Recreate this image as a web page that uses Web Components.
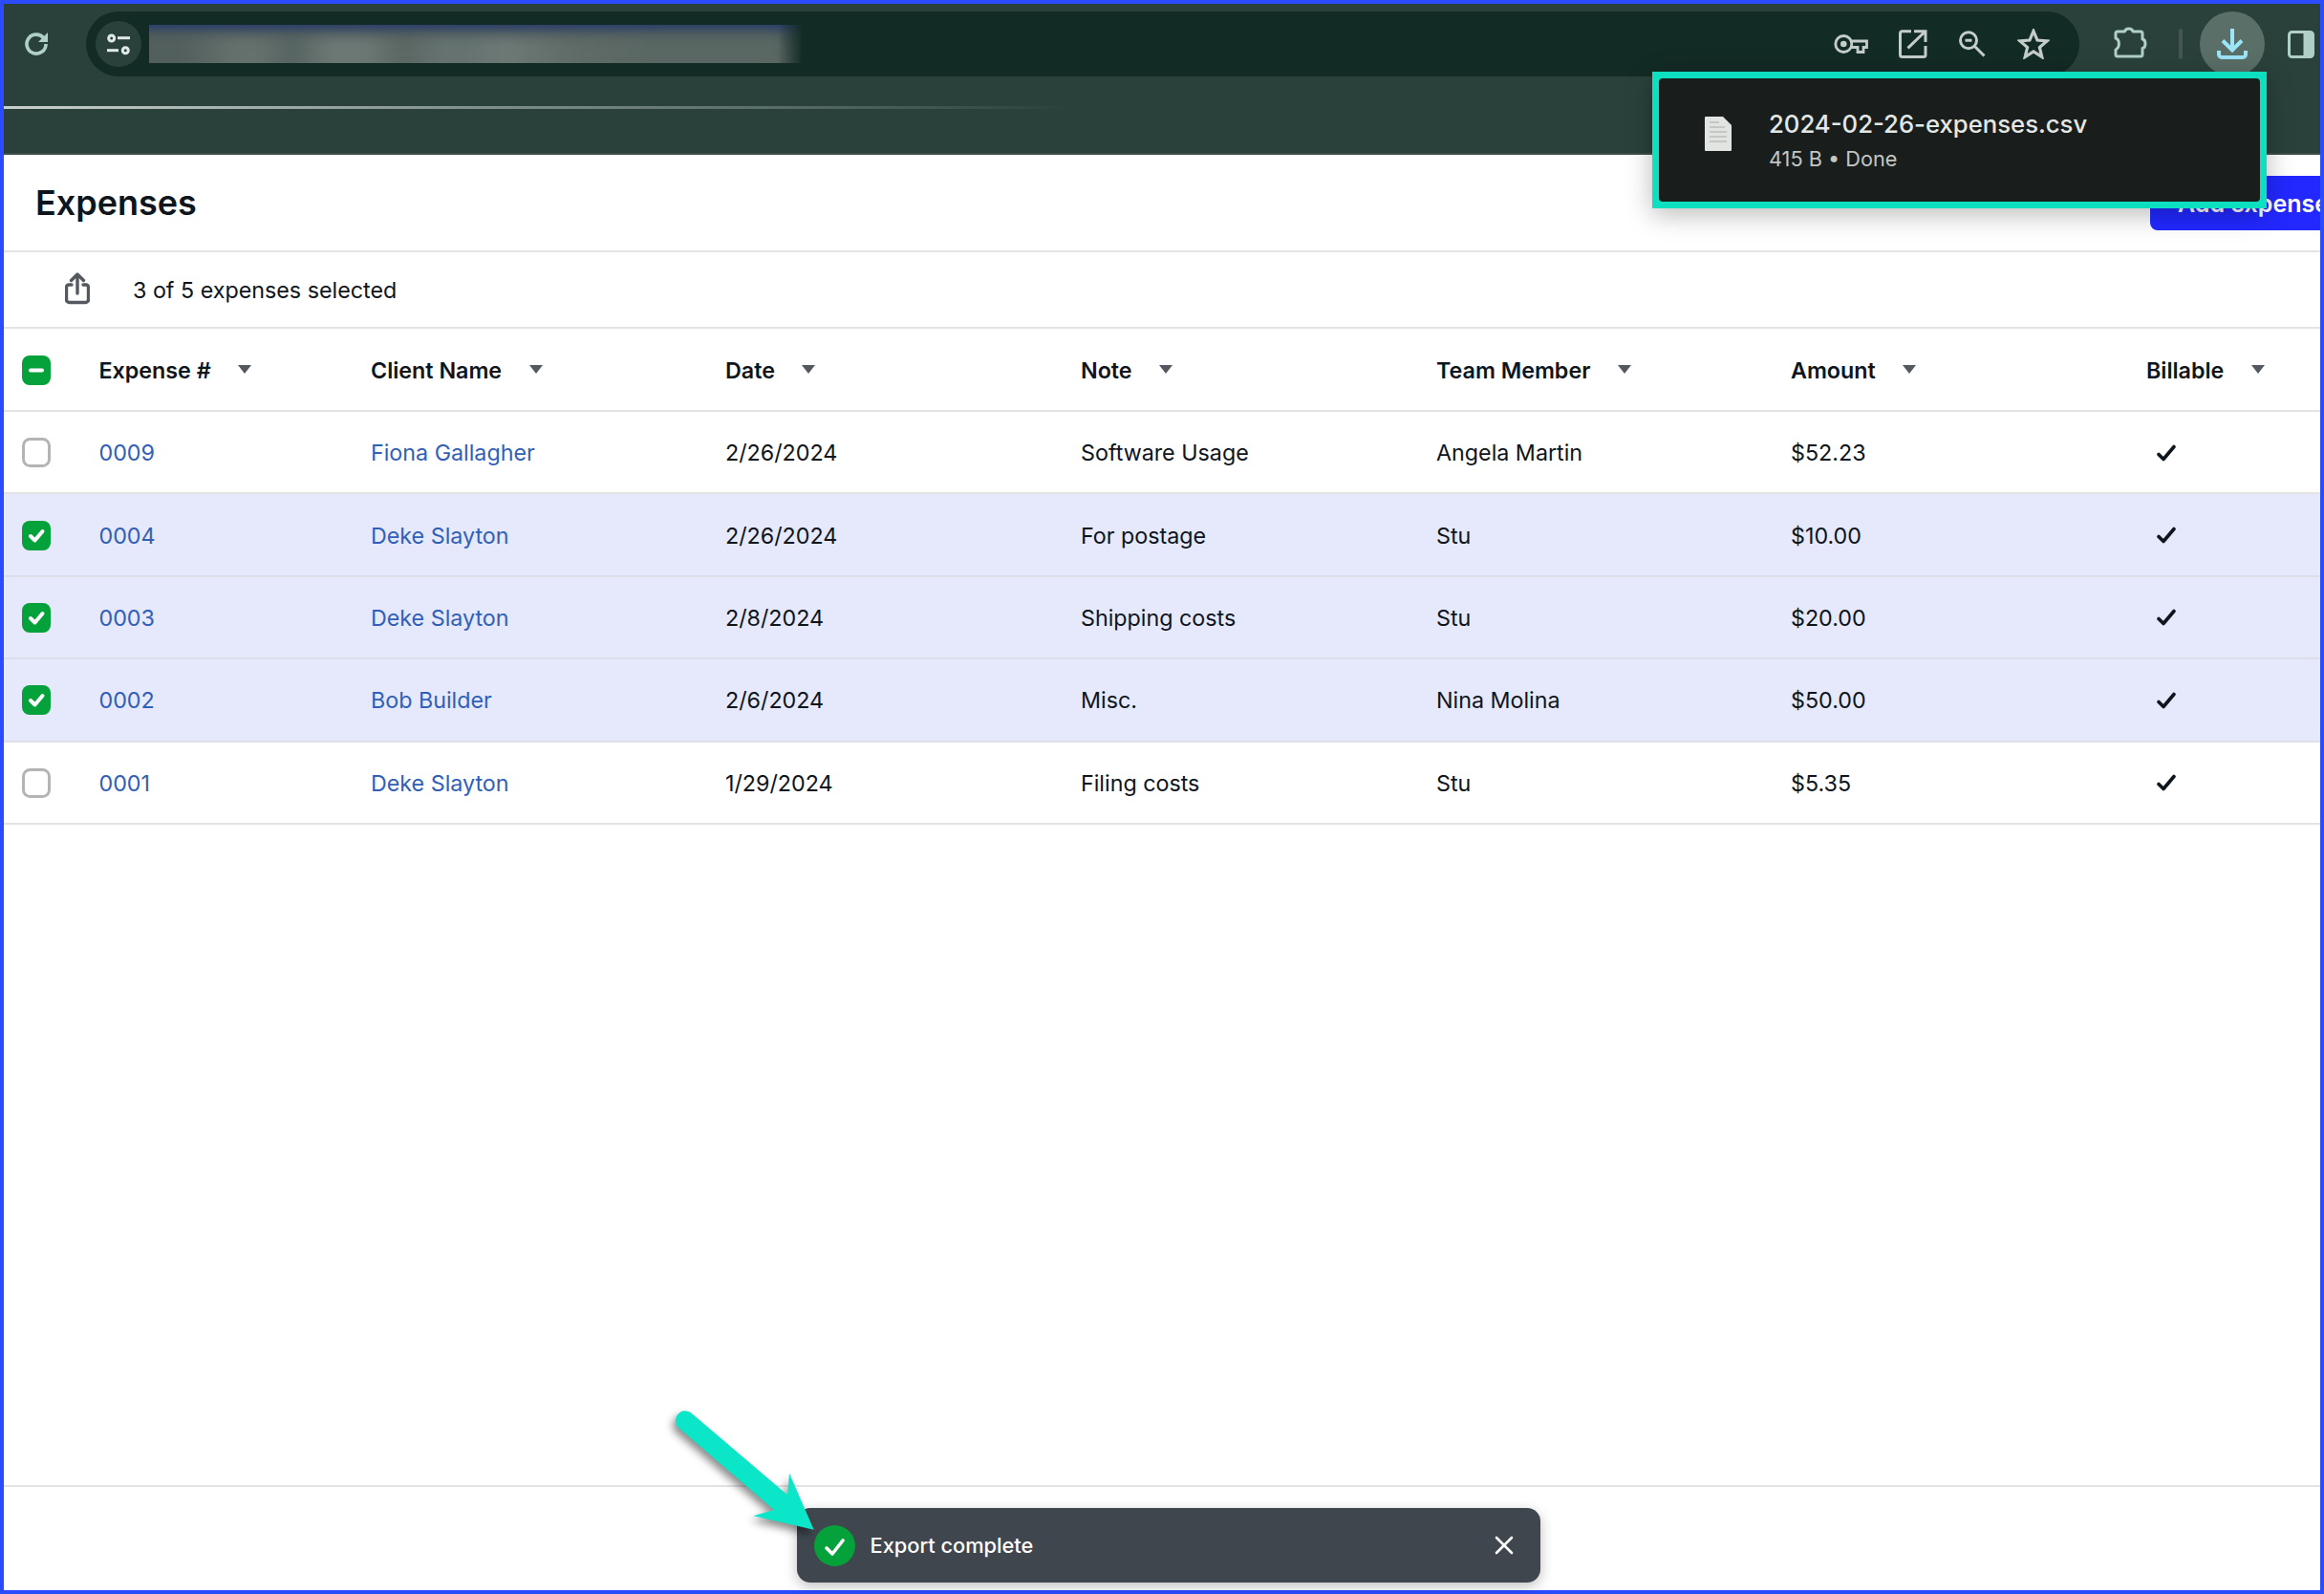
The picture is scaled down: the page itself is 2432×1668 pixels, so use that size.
<!DOCTYPE html>
<html>
<head>
<meta charset="utf-8">
<title>Expenses</title>
<style>
  html, body { margin: 0; height: 100%; }
  body {
    background: #fff;
    font-family: Inter, "Liberation Sans", sans-serif;
    color: #0e151c;
    overflow: hidden;
  }
</style>
</head>
<body>
<app-frame>
  <browser-bar slot="bar"></browser-bar>
  <page-header>Expenses</page-header>
  <selection-bar>3 of 5 expenses selected</selection-bar>
  <expense-row head>
    <tick-box state="mixed"></tick-box>
    <sort-head>Expense #</sort-head>
    <sort-head>Client Name</sort-head>
    <sort-head>Date</sort-head>
    <sort-head>Note</sort-head>
    <sort-head>Team Member</sort-head>
    <sort-head>Amount</sort-head>
    <sort-head>Billable</sort-head>
  </expense-row>
  <expense-row>
    <tick-box></tick-box><a>0009</a><a>Fiona Gallagher</a><span>2/26/2024</span><span>Software Usage</span><span>Angela Martin</span><span>$52.23</span><bill-check></bill-check>
  </expense-row>
  <expense-row selected>
    <tick-box state="on"></tick-box><a>0004</a><a>Deke Slayton</a><span>2/26/2024</span><span>For postage</span><span>Stu</span><span>$10.00</span><bill-check></bill-check>
  </expense-row>
  <expense-row selected>
    <tick-box state="on"></tick-box><a>0003</a><a>Deke Slayton</a><span>2/8/2024</span><span>Shipping costs</span><span>Stu</span><span>$20.00</span><bill-check></bill-check>
  </expense-row>
  <expense-row selected>
    <tick-box state="on"></tick-box><a>0002</a><a>Bob Builder</a><span>2/6/2024</span><span>Misc.</span><span>Nina Molina</span><span>$50.00</span><bill-check></bill-check>
  </expense-row>
  <expense-row>
    <tick-box></tick-box><a>0001</a><a>Deke Slayton</a><span>1/29/2024</span><span>Filing costs</span><span>Stu</span><span>$5.35</span><bill-check></bill-check>
  </expense-row>
  <page-footer slot="footer"></page-footer>
  <download-popup slot="over" name="2024-02-26-expenses.csv" meta="415 B • Done"></download-popup>
  <toast-note slot="over">Export complete</toast-note>
  <callout-arrow slot="over"></callout-arrow>
</app-frame>

<script>
// small helper, every element just sets its own shadow html
const shadow = (el, html) => {
  el.attachShadow({mode: 'open'}).innerHTML = html;
};

customElements.define('app-frame', class extends HTMLElement {
  constructor() {
    super();
    shadow(this, `
<style>
  :host {
    display: flex;
    flex-direction: column;
    position: relative;
    box-sizing: border-box;
    height: 100vh;
    border: 4px solid #2b4bff;
    background: #fff;
  }
  main { flex: 1; min-height: 0; }
</style>
<slot name="bar"></slot>
<main><slot></slot></main>
<slot name="footer"></slot>
<slot name="over"></slot>`);
  }
});

customElements.define('browser-bar', class extends HTMLElement {
  constructor() {
    super();
    shadow(this, `
<style>
  :host {
    display: flex;
    flex-direction: column;
    flex: none;
    box-sizing: border-box;
    height: 158px;
    background: #2a413b;
    border-bottom: 2px solid #3e4d49;
  }
  .top { display: flex; align-items: center; height: 68px; margin-top: 8px; flex: none; }
  .reload { width: 24px; height: 24px; margin: 0 0 0 22px; flex: none; }
  .omni {
    flex: none;
    display: flex;
    align-items: center;
    box-sizing: border-box;
    width: 2086px;
    height: 68px;
    margin-left: 40px;
    padding-left: 10px;
    border-radius: 34px;
    background: #132b25;
  }
  .site {
    flex: none;
    display: flex;
    align-items: center;
    justify-content: center;
    width: 48px;
    height: 48px;
    border-radius: 50%;
    background: #2a413b;
  }
  .url {
    flex: none;
    position: relative;
    overflow: hidden;
    width: 684px;
    height: 40px;
    margin-left: 8px;
    background: linear-gradient(#2c3f6a, #47565c 25%, #55625f 55%, #57645f);
  }
  .url i {
    position: absolute;
    left: -20px;
    right: 24px;
    top: 12px;
    bottom: -8px;
    filter: blur(7px);
    background: linear-gradient(90deg, #525f5d 0 8%, #65716d 16% 20%, #566360 25%, #6d7975 31% 36%, #5a6763 42%, #667370 48% 52%, #6e7a76 58%, #5f6c68 68%, #5a6763 80% 100%);
  }
  .url::after {
    content: "";
    position: absolute;
    right: 0;
    top: 0;
    bottom: 0;
    width: 26px;
    background: linear-gradient(90deg, transparent, #132b25);
  }
  .omni-icons { margin-left: auto; display: flex; align-items: center; gap: 32px; padding-right: 31px; }
  svg { display: block; }
  .ext { margin-left: 35px; flex: none; }
  .div { width: 4px; height: 32px; border-radius: 2px; background: #43574f; margin-left: 33px; flex: none; }
  .dl {
    flex: none;
    display: flex;
    align-items: center;
    justify-content: center;
    width: 68px;
    height: 68px;
    margin-left: 18px;
    border-radius: 50%;
    background: #5a6f68;
  }
  .panel { flex: none; margin-left: 24px; }
  .line {
    height: 3px;
    margin-top: 30.500px;
    background: linear-gradient(90deg, #c8d0cc 0, #8e9d98 16%, #566b65 34%, #2a413b 46%);
  }
</style>
<div class="top">
  <svg class="reload" viewBox="0 0 24 24"><path d="M19.500 5.500A10 10 0 1 0 22 12" fill="none" stroke="#b0cfc6" stroke-width="3.600"/><path d="M24 0v10H14z" fill="#b0cfc6"/></svg>
  <div class="omni">
    <div class="site">
      <svg width="28" height="28" viewBox="0 0 28 28" fill="none" stroke="#e0e9e5" stroke-width="3"><circle cx="6.700" cy="8" r="3"/><path d="M13 7.700h13"/><circle cx="21.300" cy="20.700" r="3"/><path d="M2 20.700h12"/></svg>
    </div>
    <div class="url"><i></i></div>
    <div class="omni-icons">
      <svg width="36" height="24" viewBox="0 0 36 24" fill="none" stroke="#c4cdc9" stroke-width="2.800"><circle cx="10.300" cy="12" r="8.500"/><circle cx="10.300" cy="12" r="3.300" fill="#c4cdc9" stroke="none"/><path d="M18.500 9H34.500V15.500H31V20.500H25V15.500H18.500"/></svg>
      <svg width="30" height="30" viewBox="0 0 30 30" fill="none" stroke="#c4cdc9" stroke-width="3"><path d="M13 1.700H3.500a2 2 0 0 0-2 2V26.500a2 2 0 0 0 2 2H26a2 2 0 0 0 2-2V17"/><path d="M9.500 19.300L28 1.500M16 1.700h12V13"/></svg>
      <svg width="30" height="30" viewBox="0 0 30 30" fill="none" stroke="#c4cdc9" stroke-width="3"><circle cx="11" cy="11.300" r="8.500"/><path d="M7.500 11.300h7M17.500 17.500l10 10"/></svg>
      <svg width="34" height="32" viewBox="0 0 34 32" fill="none" stroke="#c4cdc9" stroke-width="3.200" stroke-linejoin="miter"><path d="M17 2.500l4 9.600 10.200.8-7.800 6.700 2.400 10L17 24l-8.800 5.600 2.400-10-7.800-6.700 10.200-.8z"/></svg>
    </div>
  </div>
  <svg class="ext" width="36" height="36" viewBox="0 0 36 36" fill="none" stroke="#b0cfc6" stroke-width="3" stroke-linejoin="round"><path d="M5 5H12.500C13.500 1 20 1 21 5H29a2 2 0 0 1 2 2V13C35 13.500 35 22 31 22.500V29a2 2 0 0 1-2 2H5a2 2 0 0 1-2-2V24C7.500 22 7.500 13.500 3 12V7a2 2 0 0 1 2-2z"/></svg>
  <div class="div"></div>
  <div class="dl">
    <svg width="34" height="34" viewBox="0 0 34 34" fill="none" stroke="#9ce4f8" stroke-width="4"><path d="M17 1v21M7 13.500l10 10 10-10"/><path d="M3 24v4a3 3 0 0 0 3 3h22a3 3 0 0 0 3-3v-4"/></svg>
  </div>
  <svg class="panel" width="28" height="29" viewBox="0 0 28 29"><rect x="1.500" y="1.500" width="25" height="26" rx="3" fill="none" stroke="#b0cfc6" stroke-width="3"/><path d="M16.500 1.500H25a2 2 0 0 1 2 2v22a2 2 0 0 1-2 2h-8.500z" fill="#b0cfc6"/></svg>
</div>
<div class="line"></div>`);
  }
});

customElements.define('download-popup', class extends HTMLElement {
  connectedCallback() {
    if (this.shadowRoot) return;
    shadow(this, `
<style>
  :host {
    position: absolute;
    left: 1725px;
    top: 71px;
    box-sizing: border-box;
    width: 643px;
    height: 143px;
    padding: 7px;
    display: flex;
    background: #0ce0c0;
    box-shadow: 0 6px 26px rgba(0,0,0,.28);
  }
  .card {
    flex: 1;
    display: flex;
    align-items: flex-start;
    border-radius: 4px;
    background: #191e1c;
  }
  .ic { margin: 40px 0 0 48px; flex: none; }
  .txt { margin-left: 39px; padding-top: 30px; }
  .name { font-size: 25.700px; line-height: 36px; color: #e3e8e6; font-weight: 500; }
  .meta { font-size: 21.700px; line-height: 30px; margin-top: 3px; color: #c2c6c4; }
</style>
<div class="card">
  <svg class="ic" width="28" height="36" viewBox="0 0 28 36"><path d="M0 1a1 1 0 0 1 1-1h18l9 9v26a1 1 0 0 1-1 1H1a1 1 0 0 1-1-1z" fill="#e2e4e2"/><path d="M5 6h10M5 11h16M5 16h18M5 21h18M5 26h18" stroke="#c4c7c5" stroke-width="2"/></svg>
  <div class="txt">
    <div class="name">${this.getAttribute('name')}</div>
    <div class="meta">${this.getAttribute('meta')}</div>
  </div>
</div>`);
  }
});

customElements.define('page-header', class extends HTMLElement {
  constructor() {
    super();
    shadow(this, `
<style>
  :host {
    display: flex;
    align-items: center;
    justify-content: space-between;
    box-sizing: border-box;
    height: 102px;
    padding-left: 33px;
    overflow: hidden;
    border-bottom: 2px solid #e3e3e3;
  }
  h1 { margin: 0; font-size: 36px; font-weight: 600; line-height: 44px; }
  button {
    flex: none;
    width: 240px;
    height: 57px;
    margin-right: -62px;
    margin-bottom: -1px;
    border: 0;
    border-radius: 8px;
    background: #2228ff;
    color: #fff;
    font: 600 25px Inter, "Liberation Sans", sans-serif;
    text-align: left;
    padding: 0 0 0 29px;
    white-space: nowrap;
  }
</style>
<h1><slot></slot></h1>
<button>Add expense</button>`);
  }
});

customElements.define('selection-bar', class extends HTMLElement {
  constructor() {
    super();
    shadow(this, `
<style>
  :host {
    display: flex;
    align-items: center;
    box-sizing: border-box;
    height: 80px;
    padding-left: 64px;
    border-bottom: 2px solid #e3e3e3;
    font-size: 23.270px;
  }
  svg { flex: none; margin-right: 45px; margin-top: -2px; }
</style>
<svg width="26" height="34" viewBox="0 0 26 34" fill="none" stroke="#54585f" stroke-width="3.400" stroke-linecap="round" stroke-linejoin="round"><path d="M13 22V2.500M6.500 8.500L13 2l6.500 6.500"/><path d="M7 13H4a2.500 2.500 0 0 0-2.500 2.500v13A3 3 0 0 0 4.500 31.500h17a3 3 0 0 0 3-3v-13A2.500 2.500 0 0 0 22 13h-3"/></svg>
<slot></slot>`);
  }
});

customElements.define('expense-row', class extends HTMLElement {
  constructor() {
    super();
    shadow(this, `
<style>
  :host {
    display: grid;
    grid-template-columns: 99.500px 284.500px 371px 372px 372px 371px 372px 182px;
    align-items: center;
    box-sizing: border-box;
    height: 86.400px;
    padding-top: 1px;
    border-bottom: 2px solid #e3e3e3;
    font-size: 23.270px;
    font-weight: 400;
    color: #0e151c;
  }
  :host([head]) { height: 87px; }
  :host([selected]) { background: #e6e8fc; border-bottom-color: #dcdeea; }
  ::slotted(a) { color: #3160b8; }
</style>
<slot></slot>`);
  }
});

customElements.define('sort-head', class extends HTMLElement {
  constructor() {
    super();
    shadow(this, `
<style>
  :host { display: flex; align-items: center; font-weight: 600; font-size: 23.270px; }
  i { width: 0; height: 0; margin-left: 28.500px; margin-top: -2px; border: 7.500px solid transparent; border-top: 9px solid #54585f; border-bottom: 0; }
</style>
<slot></slot><i></i>`);
  }
});

customElements.define('tick-box', class extends HTMLElement {
  static get observedAttributes() {
    return ['state'];
  }
  constructor() {
    super();
    shadow(this, `
<style>
  :host { display: block; margin-left: 19px; width: 30px; height: 31px; }
  svg { display: block; }
</style>
<svg width="30" height="31" viewBox="0 0 30 31"></svg>`);
    this.draw();
  }
  attributeChangedCallback() {
    this.draw();
  }
  draw() {
    const state = this.getAttribute('state');
    const svg = this.shadowRoot.querySelector('svg');
    if (state === 'on') {
      svg.innerHTML = '<rect width="30" height="31" rx="8" fill="#05a13b"/><path d="M9 16l4.500 4.500 8-9.500" fill="none" stroke="#fff" stroke-width="4" stroke-linecap="round" stroke-linejoin="round"/>';
    } else if (state === 'mixed') {
      svg.innerHTML = '<rect width="30" height="31" rx="8" fill="#05a13b"/><path d="M9 15.500h12" stroke="#fff" stroke-width="4" stroke-linecap="round"/>';
    } else {
      svg.innerHTML = '<rect x="1.500" y="1.500" width="27" height="28" rx="7" fill="#fff" stroke="#b4b4b4" stroke-width="3"/>';
    }
  }
});

customElements.define('bill-check', class extends HTMLElement {
  constructor() {
    super();
    shadow(this, `
<style>
  :host { display: block; margin-left: 11px; width: 20px; height: 18px; }
  svg { display: block; }
</style>
<svg width="20" height="18" viewBox="0 0 20 18" fill="none" stroke="#0e151c" stroke-width="3.600" stroke-linecap="round" stroke-linejoin="round"><path d="M2 10.500l5 5L18 2.500"/></svg>`);
  }
});

customElements.define('page-footer', class extends HTMLElement {
  constructor() {
    super();
    shadow(this, `
<style>
  :host { display: block; flex: none; height: 110px; border-top: 2px solid #e3e3e3; box-sizing: border-box; }
</style>`);
  }
});

customElements.define('toast-note', class extends HTMLElement {
  constructor() {
    super();
    shadow(this, `
<style>
  :host {
    position: absolute;
    left: 830px;
    top: 1574px;
    box-sizing: border-box;
    width: 778px;
    height: 78px;
    display: flex;
    align-items: center;
    padding: 0 18px 0 18px;
    border-radius: 14px;
    background: #3f464e;
    color: #fff;
    box-shadow: 0 4px 14px rgba(0,0,0,.25);
    font-size: 21.800px;
    font-weight: 500;
  }
  .ok { flex: none; margin-right: 15.500px; }
  .x { flex: none; margin-left: auto; margin-right: 10px; }
</style>
<svg class="ok" width="43" height="43" viewBox="0 0 43 43"><circle cx="21.500" cy="21.500" r="21.500" fill="#05a13b"/><path d="M13 24l6 6 11-14" fill="none" stroke="#fff" stroke-width="3.600" stroke-linecap="round" stroke-linejoin="round"/></svg>
<slot></slot>
<svg class="x" width="20" height="20" viewBox="0 0 20 20" fill="none" stroke="#fff" stroke-width="2.600" stroke-linecap="round"><path d="M2 2l16 16M18 2L2 18"/></svg>`);
  }
});

customElements.define('callout-arrow', class extends HTMLElement {
  constructor() {
    super();
    shadow(this, `
<style>
  :host { position: absolute; left: 696px; top: 1466px; width: 170px; height: 150px; filter: drop-shadow(-3px 5px 4px rgba(0,0,0,.45)); }
  svg { display: block; }
</style>
<svg width="170" height="150" viewBox="700 1470 170 150"><path d="M725 1480L824 1564.300 826 1541.700 851.700 1600.700 788.300 1586.300 810 1580 709.300 1493.300A10 10 0 0 1 725 1480z" fill="#0ce6c8"/></svg>`);
  }
});
</script>
</body>
</html>
